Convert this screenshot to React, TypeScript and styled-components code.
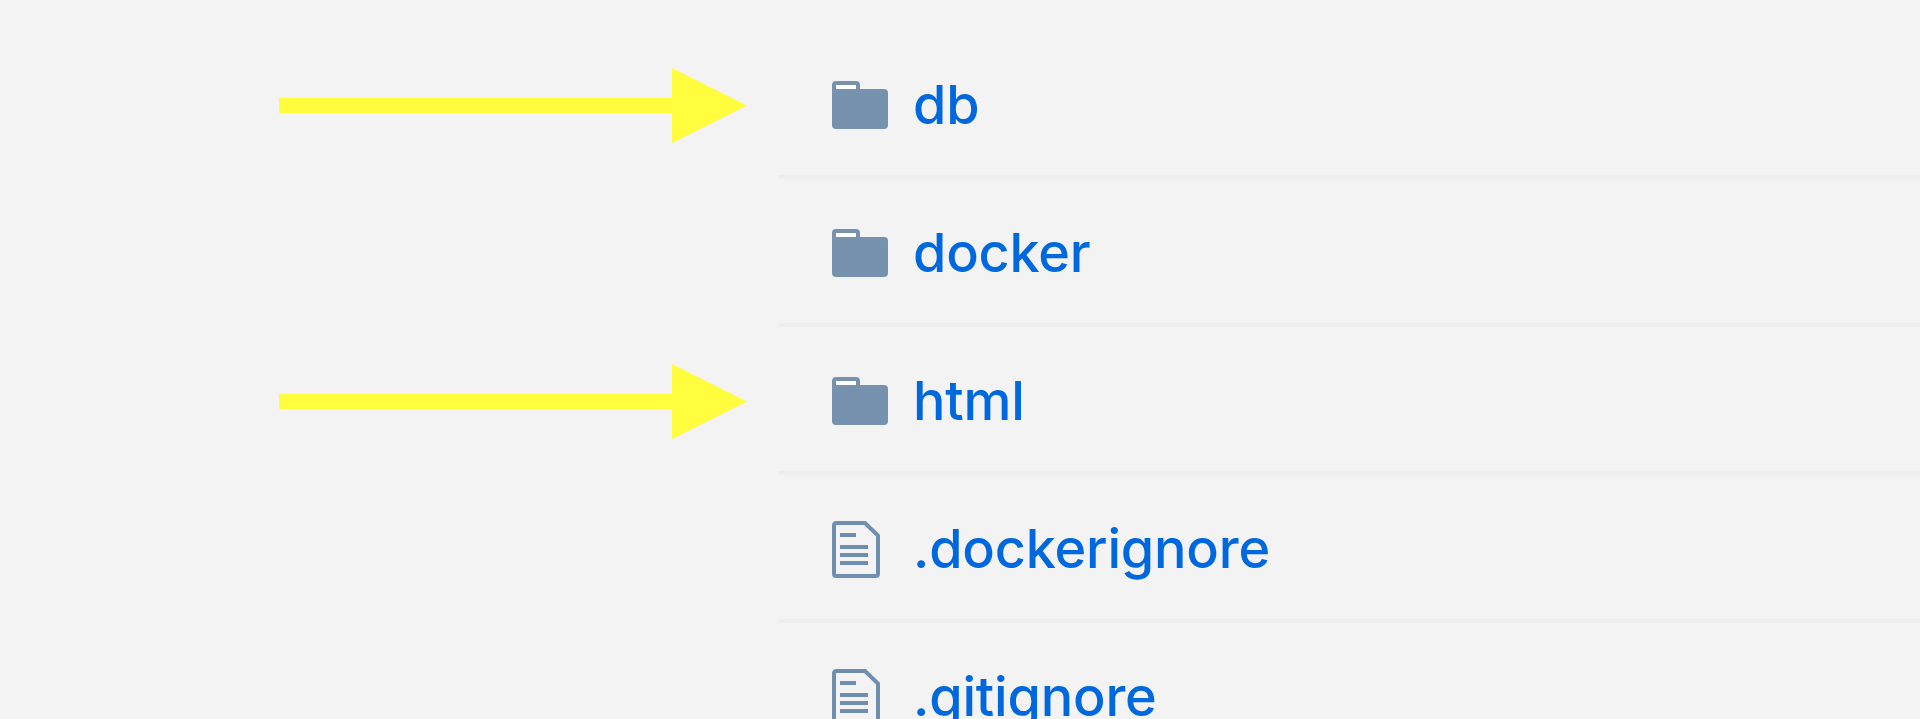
import styled, { createGlobalStyle } from 'styled-components'

const colors = {
  page: '#f3f3f3',
  line: '#eeeef0',
  link: '#0068de',
  icon: '#7792af',
  fileIcon: '#6f8eb0',
  arrow: '#fffd3e'
}

const GlobalStyle = createGlobalStyle`
  html, body {
    margin: 0;
    height: 100%;
    overflow: hidden;
    background: ${colors.page};
  }
`

const Page = styled.div`
  height: 719px;
  padding-top: 31px;
  box-sizing: border-box;
  overflow: hidden;
`

const Row = styled.div`
  display: flex;
  height: 148px;
`

const Gutter = styled.div`
  flex: 0 0 779px;
  box-sizing: border-box;
  padding-left: 279px;
  display: flex;
  align-items: center;
`

const Entry = styled.div`
  flex: 1;
  box-sizing: border-box;
  display: flex;
  align-items: center;
  padding: 4px 0 0 53px;
  border-bottom: 4px solid ${colors.line};
`

const IconSlot = styled.div`
  flex: 0 0 81px;
  display: flex;
  align-items: center;
`

const Name = styled.a`
  font-family: Inter, 'Liberation Sans', sans-serif;
  font-size: 54px;
  font-weight: 450;
  letter-spacing: -0.2px;
  line-height: 64px;
  color: ${colors.link};
  text-decoration: none;
`

function Arrow (): JSX.Element {
  return (
    <svg width='468' height='75' viewBox='0 0 468 75'>
      <path d='M0 30H393V0L468 37.5L393 75V45H0Z' fill={colors.arrow} />
    </svg>
  )
}

function FolderIcon (): JSX.Element {
  return (
    <svg width='56' height='48' viewBox='0 0 56 48'>
      <path
        d='M4 0H24Q28 0 28 4V8H52Q56 8 56 12V44Q56 48 52 48H4Q0 48 0 44V4Q0 0 4 0Z'
        fill={colors.icon}
      />
      <rect x='4' y='4' width='20' height='4' fill='#fff' />
    </svg>
  )
}

function FileIcon (): JSX.Element {
  return (
    <svg width='48' height='57' viewBox='0 0 48 57'>
      <path
        d='M4.5 2H33L46 14.5V52.5Q46 55 43.5 55H4.5Q2 55 2 52.5V4.5Q2 2 4.5 2Z'
        fill='none'
        stroke={colors.fileIcon}
        strokeWidth='4'
      />
      <rect x='8' y='12' width='16' height='4' fill={colors.fileIcon} />
      <rect x='8' y='24' width='28' height='4' fill={colors.fileIcon} />
      <rect x='8' y='32' width='28' height='4' fill={colors.fileIcon} />
      <rect x='8' y='40' width='28' height='4' fill={colors.fileIcon} />
    </svg>
  )
}

const entries = [
  { name: 'db', folder: true, marked: true },
  { name: 'docker', folder: true, marked: false },
  { name: 'html', folder: true, marked: true },
  { name: '.dockerignore', folder: false, marked: false },
  { name: '.gitignore', folder: false, marked: false }
]

export default function App (): JSX.Element {
  return (
    <Page>
      <GlobalStyle />
      {entries.map((entry) => (
        <Row key={entry.name}>
          <Gutter>{entry.marked && <Arrow />}</Gutter>
          <Entry>
            <IconSlot>{entry.folder ? <FolderIcon /> : <FileIcon />}</IconSlot>
            <Name>{entry.name}</Name>
          </Entry>
        </Row>
      ))}
    </Page>
  )
}
